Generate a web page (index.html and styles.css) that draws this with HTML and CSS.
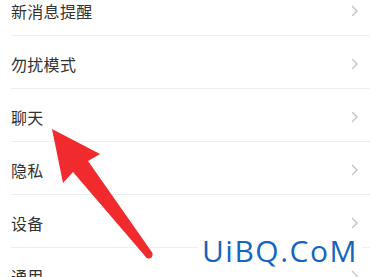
FILE: index.html
```html
<!DOCTYPE html>
<html lang="zh">
<head>
<meta charset="utf-8">
<link rel="stylesheet" href="styles.css">
</head>
<body>
<div class="screen">
  <ul class="list">
    <li class="row"><span class="label">新消息提醒</span><svg class="chev" viewBox="0 0 7 12"><path d="M1 1 L6 6 L1 11"/></svg></li>
    <li class="row"><span class="label">勿扰模式</span><svg class="chev" viewBox="0 0 7 12"><path d="M1 1 L6 6 L1 11"/></svg></li>
    <li class="row"><span class="label">聊天</span><svg class="chev" viewBox="0 0 7 12"><path d="M1 1 L6 6 L1 11"/></svg></li>
    <li class="row"><span class="label">隐私</span><svg class="chev" viewBox="0 0 7 12"><path d="M1 1 L6 6 L1 11"/></svg></li>
    <li class="row"><span class="label">设备</span><svg class="chev" viewBox="0 0 7 12"><path d="M1 1 L6 6 L1 11"/></svg></li>
    <li class="row"><span class="label">通用</span><svg class="chev" viewBox="0 0 7 12"><path d="M1 1 L6 6 L1 11"/></svg></li>
  </ul>
  <svg class="arrow" viewBox="0 0 370 277" width="370" height="277">
    <path d="M52 129 L100 154 L88 161 L152.5 253 Q153 258 149 258.5 Q146.5 259 145 256 L73 172 L63 183 Z" />
  </svg>
  <div class="watermark">UiBQ.CoM</div>
</div>
</body>
</html>
```
FILE: styles.css
```css
html, body {
  margin: 0;
  padding: 0;
  background: #ffffff;
}
.screen {
  position: relative;
  width: 370px;
  height: 277px;
  overflow: hidden;
  background: #ffffff;
  font-family: "Noto Sans CJK SC", "Noto Sans", sans-serif;
}
.list {
  list-style: none;
  margin: -17px 0 0 0;
  padding: 0;
}
.row {
  display: flex;
  align-items: center;
  justify-content: space-between;
  height: 52px;
  margin-left: 11px;
  padding-right: 12px;
  border-bottom: 1px solid #efefef;
  box-sizing: content-box;
}
.label {
  font-size: 16px;
  color: #333333;
  padding-top: 4px;
  letter-spacing: 0.3px;
}
.chev {
  width: 7px;
  height: 12px;
  margin-top: 4px;
  fill: none;
  stroke: #c4c4c4;
  stroke-width: 1.4;
}
.arrow {
  position: absolute;
  left: 0;
  top: 0;
  fill: #f02a2d;
}
.watermark {
  position: absolute;
  left: 198px;
  top: 232px;
  padding: 0 4px;
  background: #ffffff;
  font-family: "Open Sans", sans-serif;
  font-size: 30px;
  line-height: 38px;
  color: #1565c0;
  letter-spacing: 1.5px;
}
```
